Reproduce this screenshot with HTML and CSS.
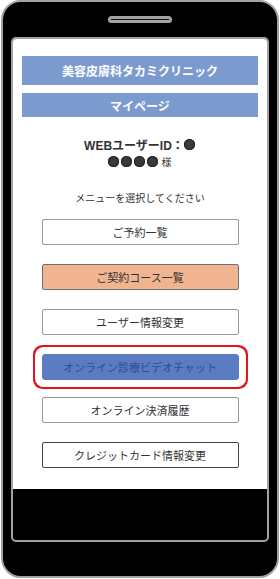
FILE: index.html
```html
<!DOCTYPE html>
<html lang="ja">
<head>
<meta charset="utf-8">
<link rel="stylesheet" href="styles.css">
</head>
<body>
<div class="phone">
  <div class="speaker"><span class="speaker-line"></span></div>
  <div class="frame">
    <div class="screen">
      <div class="bar bar-title">美容皮膚科タカミクリニック</div>
      <div class="bar bar-sub">マイページ</div>
      <div class="user">
        <div class="user-line">WEBユーザーID：<span class="dot"></span></div>
        <div class="user-line"><span class="dot"></span><span class="dot"></span><span class="dot"></span><span class="dot"></span><span class="sama">様</span></div>
      </div>
      <div class="prompt">メニューを選択してください</div>
      <div class="menu">
        <div class="btn">ご予約一覧</div>
        <div class="btn btn-peach">ご契約コース一覧</div>
        <div class="btn">ユーザー情報変更</div>
        <div class="btn btn-blue">オンライン診療ビデオチャット</div>
        <div class="btn btn-pay">オンライン決済履歴</div>
        <div class="btn btn-dark">クレジットカード情報変更</div>
      </div>
    </div>
  </div>
</div>
</body>
</html>
```

FILE: styles.css
```css
html, body {
  margin: 0;
  padding: 0;
  background: #fff;
}
body {
  font-family: "Liberation Sans", "Noto Sans CJK JP", sans-serif;
  width: 280px;
  height: 579px;
  overflow: hidden;
}
.phone {
  box-sizing: border-box;
  margin: 0 1px;
  width: 278px;
  height: 578px;
  background: #000;
  border: 2px solid #a3a3a3;
  border-radius: 20px;
  display: flex;
  flex-direction: column;
  align-items: center;
}
.speaker {
  box-sizing: border-box;
  margin-top: 14px;
  width: 64px;
  height: 7px;
  border: 2px solid #a3a3a3;
  border-radius: 4px;
  background: #a3a3a3;
  display: flex;
  align-items: center;
  justify-content: center;
}
.speaker-line {
  width: 58px;
  height: 1px;
  background: #111;
}
.frame {
  box-sizing: border-box;
  margin-top: 14px;
  width: 258px;
  height: 505px;
  border: 2px solid #a3a3a3;
  border-radius: 5px;
  background: #000;
  overflow: hidden;
}
.screen {
  height: 450px;
  background: #fff;
  display: flex;
  flex-direction: column;
  align-items: center;
  padding-top: 17px;
  box-sizing: border-box;
}
.bar {
  width: 236px;
  background: #7b9bcf;
  color: #fff;
  font-weight: bold;
  font-size: 12px;
  display: flex;
  align-items: center;
  justify-content: center;
}
.bar-title {
  height: 29px;
}
.bar-sub {
  height: 24px;
  margin-top: 8px;
}
.user {
  margin-top: 19px;
  display: flex;
  flex-direction: column;
  align-items: center;
  font-size: 12px;
  font-weight: bold;
  color: #333;
}
.user-line {
  height: 17px;
  display: flex;
  align-items: center;
}
.dot {
  display: inline-block;
  width: 11px;
  height: 11px;
  border-radius: 50%;
  background: #3a3a3a;
  box-shadow: inset 0 0 0 1px #222;
  margin: 0 1px;
}
.user-line .dot:first-child {
  margin-left: 0;
}
.sama {
  font-size: 10px;
  font-weight: normal;
  margin-left: 2px;
}
.prompt {
  margin-top: 21px;
  font-size: 10px;
  line-height: 16px;
  color: #333;
}
.menu {
  margin-top: 12px;
  display: flex;
  flex-direction: column;
  gap: 19px;
}
.btn {
  box-sizing: border-box;
  width: 197px;
  height: 26px;
  border: 1px solid #9a9a9a;
  border-radius: 2px;
  background: #fff;
  color: #333;
  font-size: 11px;
  display: flex;
  align-items: center;
  justify-content: center;
}
.btn-peach {
  background: #f0b590;
  border-color: #6f6f6f;
}
.btn-blue {
  background: #5b7bc2;
  border-color: #5b7bc2;
  color: #2f4b96;
  box-shadow: 0 0 0 7px #fff, 0 0 0 9px #e1141c;
  border-radius: 3px;
}
.btn-pay {
  margin-top: -2px;
}
.btn-dark {
  border-color: #444;
  border-width: 1.5px;
}
```
